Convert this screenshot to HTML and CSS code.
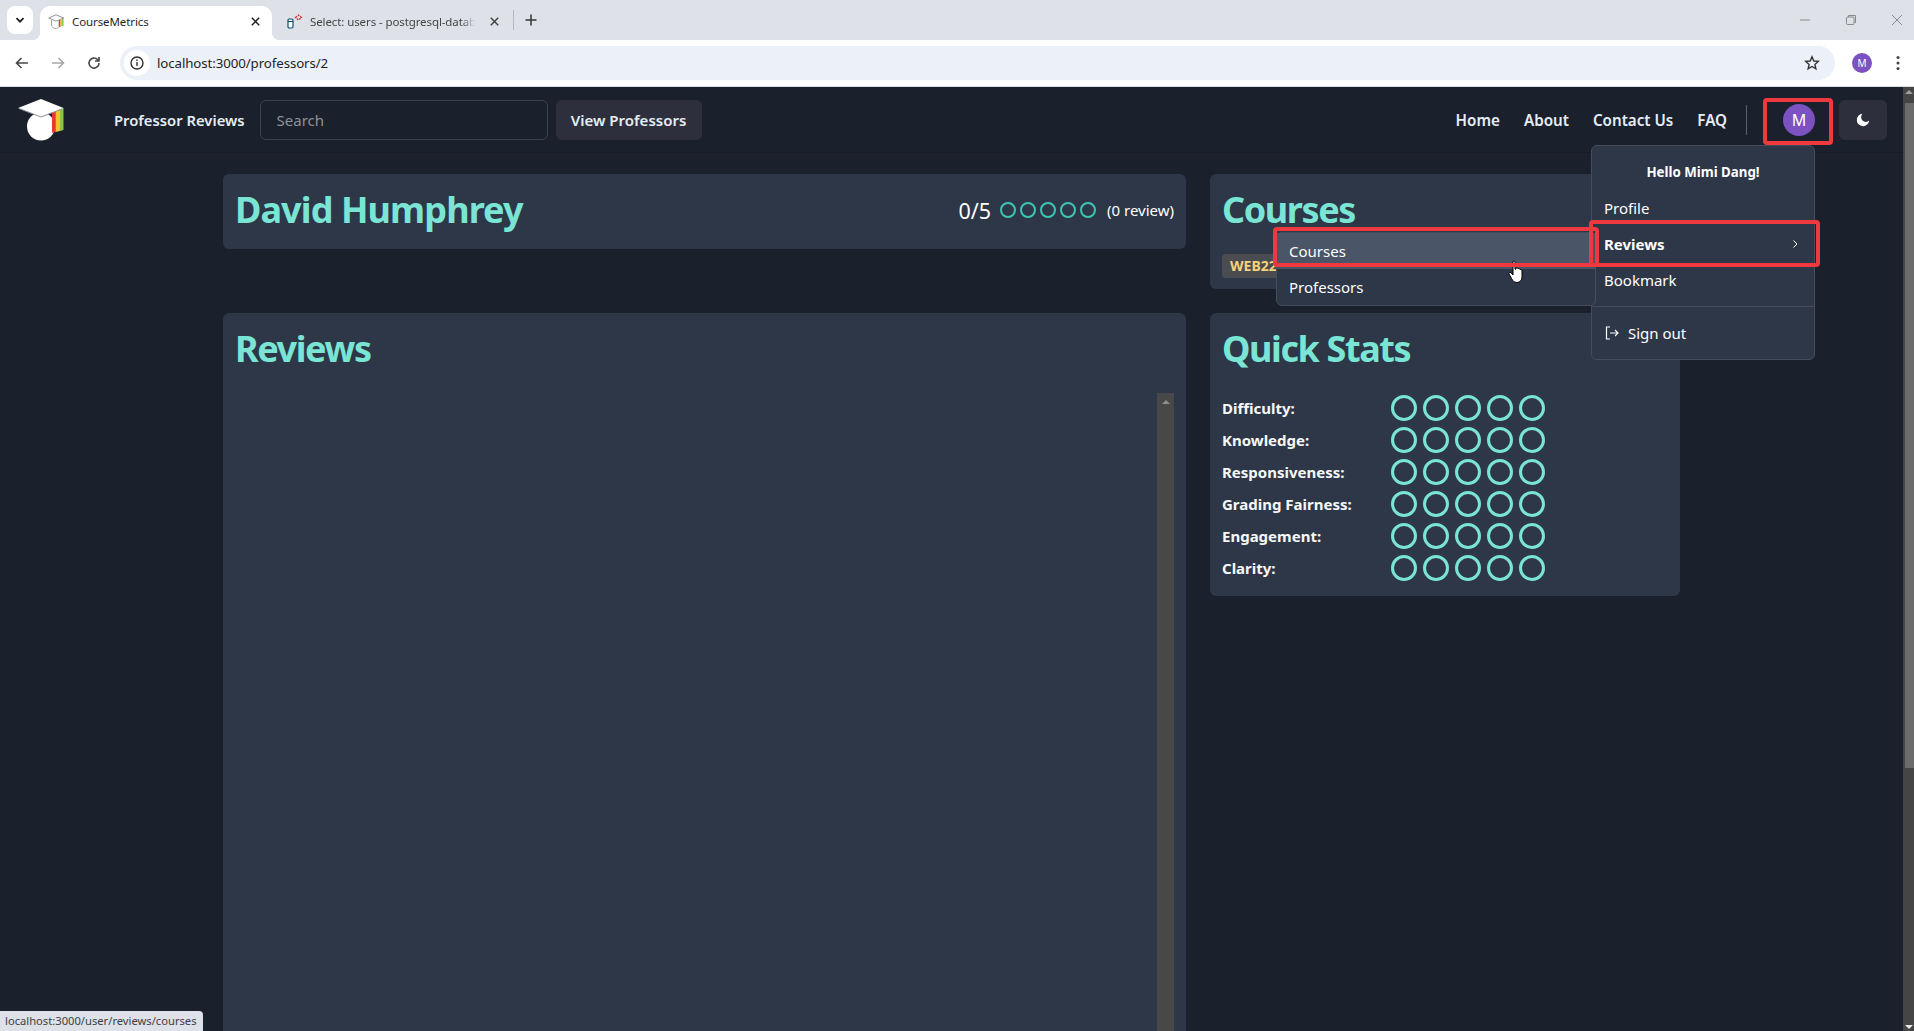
FILE: index.html
```html
<!DOCTYPE html>
<html lang="en">
<head>
<meta charset="utf-8">
<title>CourseMetrics</title>
<link rel="stylesheet" href="styles.css">
</head>
<body>
<div class="browser">
  <div class="tabstrip">
    <button class="tabsearch"><svg width="12" height="12" viewBox="0 0 12 12"><path d="M2.500 4.200 6 7.700l3.500-3.500" fill="none" stroke="#1f1f1f" stroke-width="1.800"/></svg></button>
    <div class="tab active">
      <svg class="favicon" width="17" height="15" viewBox="0 0 17 15"><path d="M3.500 6v5c.8 2.500 2.500 3.500 4 3.500s2.700-.6 3.500-1.800V6" fill="#fff" stroke="#9a9a9a" stroke-width=".9"/><path d="M11 6h1.500v7H11z" fill="#e8392f"/><path d="M12.500 5.500H14v6.500h-1.500z" fill="#f4c430"/><path d="M14 4.500h1.500V12H14z" fill="#8bc34a"/><path d="M.8 4 8 .8 15.800 4 8 7.200z" fill="#fff" stroke="#8a8a8a" stroke-width=".9"/></svg>
      <span class="tabtitle">CourseMetrics</span>
      <svg class="tabclose" width="9" height="9" viewBox="0 0 9 9"><path d="M.8.800l7.400 7.400M8.200.800.800 8.200" stroke="#1f1f1f" stroke-width="1.500"/></svg>
    </div>
    <div class="tab inactive">
      <svg class="favicon" width="16" height="15" viewBox="0 0 16 15"><rect x="1" y="5" width="5" height="9" rx="1.200" fill="#fff" stroke="#0b4f6c" stroke-width="1.200"/><path d="M1 7.500h5" stroke="#0b4f6c"/><path d="M8.500 3.500 11.500 1l3 2.500-3 2.500z" fill="none" stroke="#d32f2f" stroke-width="1.300" stroke-dasharray="2 1"/></svg>
      <span class="tabtitle fade">Select: users - postgresql-datab</span>
      <svg class="tabclose" width="9" height="9" viewBox="0 0 9 9"><path d="M.8.800l7.400 7.400M8.200.800.800 8.200" stroke="#444" stroke-width="1.500"/></svg>
    </div>
    <span class="tabsep"></span>
    <svg class="newtab" width="12" height="12" viewBox="0 0 12 12"><path d="M6 .5v11M.5 6h11" stroke="#333" stroke-width="1.500"/></svg>
    <div class="winctl">
      <svg width="12" height="12" viewBox="0 0 12 12"><path d="M1 6h10" stroke="#8a8a8a"/></svg>
      <svg width="12" height="12" viewBox="0 0 12 12"><path d="M3.500 3V1.500h7v7H9" fill="none" stroke="#8a8a8a"/><rect x="1.500" y="3" width="7.500" height="7.500" rx="1" fill="none" stroke="#8a8a8a"/></svg>
      <svg width="12" height="12" viewBox="0 0 12 12"><path d="M1 1l10 10M11 1 1 11" stroke="#8a8a8a"/></svg>
    </div>
  </div>
  <div class="toolbar">
    <svg class="tool" width="16" height="16" viewBox="0 0 16 16"><path d="M14 8H3M7.500 3 2.500 8l5 5" fill="none" stroke="#474747" stroke-width="1.600"/></svg>
    <svg class="tool" width="16" height="16" viewBox="0 0 16 16"><path d="M2 8h11M8.500 3l5 5-5 5" fill="none" stroke="#a8a8a8" stroke-width="1.600"/></svg>
    <svg class="tool" width="16" height="16" viewBox="0 0 16 16"><path d="M13 8a5 5 0 1 1-1.500-3.500L13 6M13 2v4H9" fill="none" stroke="#474747" stroke-width="1.600"/></svg>
    <div class="omnibox">
      <span class="siteinfo"><svg width="16" height="16" viewBox="0 0 16 16"><circle cx="8" cy="8" r="6" fill="none" stroke="#333" stroke-width="1.400"/><path d="M8 7v4M8 4.600v1.300" stroke="#333" stroke-width="1.400"/></svg></span>
      <span class="url">localhost:3000/professors/2</span>
      <svg class="star" width="16" height="16" viewBox="0 0 16 16"><path d="M8 1.800 9.800 6l4.500.4-3.400 3 1 4.400L8 11.500l-3.900 2.300 1-4.400-3.400-3L6.200 6z" fill="none" stroke="#333" stroke-width="1.400"/></svg>
    </div>
    <span class="profile">M</span>
    <svg class="kebab" width="4" height="16" viewBox="0 0 4 16"><circle cx="2" cy="2.500" r="1.500" fill="#444"/><circle cx="2" cy="8" r="1.500" fill="#444"/><circle cx="2" cy="13.500" r="1.500" fill="#444"/></svg>
  </div>
</div>

<div class="viewport">
  <div class="page">
    <header class="navbar">
      <svg class="logo" width="46" height="42" viewBox="0 0 46 42"><circle cx="23" cy="27.500" r="14" fill="#fff"/><path d="M34 12h3.500v21L34 34z" fill="#e8392f"/><path d="M37.500 11H42v21l-4.500 1z" fill="#f4c430"/><path d="M42 9h3.500v22L42 32z" fill="#8bc34a"/><path d="M0 9 23 0l22.500 9L23 18z" fill="#fff"/><path d="M1 9.500 23 18l21-8" fill="none" stroke="#8d9299" stroke-width="1"/></svg>
      <a class="brand">Professor Reviews</a>
      <input class="search" placeholder="Search">
      <button class="ghost-btn">View Professors</button>
      <nav class="navlinks">
        <a>Home</a><a>About</a><a>Contact Us</a><a>FAQ</a>
      </nav>
      <span class="navsep"></span>
      <div class="avatarwrap"><span class="avatar">M</span></div>
      <button class="themebtn"><svg width="14" height="14" viewBox="0 0 14 14"><path d="M6.500.8A6.200 6.200 0 1 0 13.200 7.500 4 4 0 0 1 6.500.8z" fill="#fff"/></svg></button>
    </header>
    <main class="content">
      <section class="card headcard">
        <h1 class="prof">David Humphrey</h1>
        <div class="rating">
          <span class="score">0/5</span>
          <span class="minis"><i></i><i></i><i></i><i></i><i></i></span>
          <span class="count">(0 review)</span>
        </div>
      </section>
      <section class="card coursecard">
        <h2>Courses</h2>
        <span class="badge">WEB222</span>
      </section>
      <section class="card reviews">
        <h2>Reviews</h2>
        <div class="reviewlist">
          <div class="innerbar"><b></b></div>
        </div>
      </section>
      <section class="card stats">
        <h2>Quick Stats</h2>
        <div class="statgrid">
          <span>Difficulty:</span><div class="dots"><i></i><i></i><i></i><i></i><i></i></div>
          <span>Knowledge:</span><div class="dots"><i></i><i></i><i></i><i></i><i></i></div>
          <span>Responsiveness:</span><div class="dots"><i></i><i></i><i></i><i></i><i></i></div>
          <span>Grading Fairness:</span><div class="dots"><i></i><i></i><i></i><i></i><i></i></div>
          <span>Engagement:</span><div class="dots"><i></i><i></i><i></i><i></i><i></i></div>
          <span>Clarity:</span><div class="dots"><i></i><i></i><i></i><i></i><i></i></div>
        </div>
      </section>
    </main>
  </div>
  <div class="pagebar"><b class="up"></b><span class="thumb"></span><b class="down"></b></div>

  <div class="menu mainmenu">
    <p class="hello">Hello Mimi Dang!</p>
    <a class="item">Profile</a>
    <a class="item strong">Reviews<svg width="8" height="10" viewBox="0 0 8 10"><path d="M2.500 1.500 6 5 2.500 8.500" fill="none" stroke="#fff" stroke-width="1"/></svg></a>
    <a class="item">Bookmark</a>
    <hr class="divider">
    <a class="item signout"><svg width="16" height="16" viewBox="0 0 16 16"><path d="M6 2H2.500v12H6M6 8h8M11 5l3 3-3 3" fill="none" stroke="#fff" stroke-width="1.200"/></svg>Sign out</a>
  </div>
  <div class="menu submenu">
    <a class="item hover">Courses</a>
    <a class="item">Professors</a>
  </div>
  <svg class="cursor" width="16" height="24" viewBox="0 0 16 24"><path d="M5 1.500c1-.8 2-.2 2 1V9l1 .2V8c1-.8 2-.3 2 .8.800-.8 2-.3 2 .8.800-.4 2 0 2 1.200V17c0 3-2 5.500-5 5.500S5 21 3.500 18.500L1 14c-.5-1 .8-2.200 2-1.200L5 15z" fill="#fff" stroke="#000"/></svg>
  <span class="mark mark-avatar"></span>
  <span class="mark mark-courses"></span>
  <span class="mark mark-reviews"></span>
  <div class="statusbar">localhost:3000/user/reviews/courses</div>
</div>
</body>
</html>
```
FILE: styles.css
```css
* { box-sizing: border-box; }
html, body { margin: 0; height: 100%; overflow: hidden; }
body { display: flex; flex-direction: column; font-family: "Noto Sans", "Open Sans", sans-serif; background: #1a202c; color: #fff; }

.browser { flex: none; background: #fff; font-family: "Noto Sans", sans-serif; }
.tabstrip { height: 40px; background: #dee1e7; display: flex; align-items: flex-end; padding-left: 7px; }
.tabsearch { flex: none; width: 26px; height: 28px; margin: 0 7px 6px 0; border: 0; border-radius: 8px; background: #fff; padding: 0; display: flex; align-items: center; justify-content: center; }
.tab { flex: none; height: 34px; display: flex; align-items: center; font-size: 11.500px; padding-bottom: 4px; position: relative; }
.tab.active { width: 232px; padding-left: 8px; padding-right: 12px; background: #fff; border-radius: 10px 10px 0 0; color: #1f1f1f; }
.tab.active::before, .tab.active::after { content: ""; position: absolute; bottom: 0; width: 8px; height: 8px; }
.tab.active::before { left: -8px; background: radial-gradient(circle at 0 0, transparent 8px, #fff 8.500px); }
.tab.active::after { right: -8px; background: radial-gradient(circle at 100% 0, transparent 8px, #fff 8.500px); }
.tab.inactive { width: 241px; padding-left: 15px; color: #444; }
.favicon { flex: none; margin-right: 7px; }
.tabtitle { flex: 1; white-space: nowrap; min-width: 0; letter-spacing: -.1px; }
.fade { flex: none; width: 165px; -webkit-mask-image: linear-gradient(90deg, #000 92%, transparent); mask-image: linear-gradient(90deg, #000 92%, transparent); }
.inactive .tabclose { margin-left: 15px; }
.tabclose { flex: none; }
.tabsep { flex: none; width: 1px; height: 20px; background: #b6b8bd; margin: 0 0 10px 0; }
.newtab { flex: none; margin: 0 0 14px 11px; }
.winctl { margin-left: auto; display: flex; gap: 34px; padding-right: 11px; align-self: center; }

.toolbar { height: 47px; display: flex; align-items: center; padding: 0 0 1px 14px; border-bottom: 1px solid #dadce0; }
.tool { flex: none; margin-right: 20px; }
.omnibox { flex: 1; height: 34px; margin: 0 17px 0 -2px; background: #ebf0f9; border-radius: 17px; display: flex; align-items: center; padding: 0 15px 0 4px; }
.siteinfo { width: 26px; height: 26px; background: #fff; border-radius: 50%; display: flex; align-items: center; justify-content: center; margin-right: 7px; }
.url { flex: 1; font-size: 13.300px; color: #1f1f1f; letter-spacing: -.1px; }
.profile { width: 20px; height: 20px; border-radius: 50%; background: #7c51c0; color: #fff; font-size: 10px; display: flex; align-items: center; justify-content: center; margin-right: 24px; }
.kebab { margin-right: 14px; flex: none; }

.viewport { flex: 1; min-height: 0; display: flex; position: relative; overflow: hidden; }
.page { flex: 1; min-width: 0; overflow: hidden; }
.pagebar { flex: none; width: 11px; background: #454545; display: flex; flex-direction: column; position: relative; }
.thumb { display: block; width: 9px; height: 665px; margin: 16px 0 0 2px; background: #6b6b6b; }
.up, .down { position: absolute; left: 2px; width: 0; height: 0; border: 4px solid transparent; }
.up { top: 3px; border-top: 0; border-bottom: 4px solid #a0a0a0; }
.down { bottom: 2px; border-bottom: 0; border-top: 4px solid #e8e8e8; }

.navbar { height: 66px; display: flex; align-items: center; padding: 0 16px 0 18px; background: #1a202c; border-bottom: 1px solid #161b25; }
.logo { flex: none; margin-right: 50px; }
.brand { font-size: 14.800px; font-weight: 600; color: #e6edf5; white-space: nowrap; margin-right: 15px; }
.search { width: 288px; height: 40px; border: 1px solid #3a4150; border-radius: 6px; background: transparent; padding: 0 16px; font: 15px "Noto Sans", sans-serif; color: #fff; margin-right: 8px; }
.search::placeholder { color: #8d929b; opacity: 1; }
.ghost-btn { height: 40px; width: 146px; border: 0; border-radius: 6px; background: #2d303c; color: #e6edf5; font: 600 15px "Noto Sans", sans-serif; padding: 0; }
.navlinks { margin-left: auto; display: flex; gap: 24px; font-size: 15.200px; font-weight: 600; color: #e6edf5; }
.navsep { width: 1px; height: 30px; background: #59606c; margin: 0 22px 0 19px; }
.avatarwrap { width: 60px; display: flex; justify-content: center; margin-right: 10px; }
.avatar { width: 32px; height: 32px; border-radius: 50%; background: #7c51c0; color: #fff; font-size: 16px; display: flex; align-items: center; justify-content: center; }
.themebtn { width: 48px; height: 40px; border: 0; border-radius: 6px; background: #2d303c; padding: 0; display: flex; align-items: center; justify-content: center; }

.content { display: grid; grid-template-columns: 963px 470px; grid-template-rows: 115px auto; gap: 24px; justify-content: center; padding-top: 21px; }
.card { background: #2d3748; border-radius: 6px; padding: 12px; }
h1, h2 { margin: 0; font-size: 36px; line-height: 48px; font-weight: 700; color: #7be5d5; letter-spacing: -1.400px; }
h1 { letter-spacing: -.9px; }
.headcard { height: 75px; display: flex; justify-content: space-between; align-items: flex-start; }
.rating { display: flex; align-items: center; margin-top: 10px; height: 28px; }
.score { font-size: 21.500px; color: #fff; margin-right: 9px; }
.minis { display: flex; gap: 4px; margin-right: 11px; }
.minis i { width: 16px; height: 16px; border: 2px solid #3dc5b3; border-radius: 50%; }
.count { font-size: 15px; color: #fff; }

.reviews { height: 900px; }
.reviewlist { margin-top: 20px; height: 800px; position: relative; }
.innerbar { position: absolute; right: 0; top: 0; bottom: 0; width: 17px; background: #484848; }
.innerbar b { position: absolute; left: 5px; top: 7px; width: 0; height: 0; border: 4px solid transparent; border-top: 0; border-bottom: 4px solid #8e8e8e; }

.badge { display: inline-block; margin-top: 20px; padding: 0 8px; height: 24px; line-height: 24px; background: #4a4c50; border-radius: 4px; color: #f5d27c; font-size: 14px; font-weight: 700; }
.stats { height: 283px; }
.statgrid { display: grid; grid-template-columns: 169px 1fr; grid-auto-rows: 32px; align-items: center; margin-top: 19px; font-size: 15px; font-weight: 700; color: #f7f7f7; }
.dots { display: flex; gap: 6px; }
.dots i { width: 26px; height: 26px; border: 3px solid #7be5d5; border-radius: 50%; }

.menu { position: absolute; background: #2d3748; border: 1px solid #454d5c; color: #fff; font-size: 15px; }
.menu a { display: flex; align-items: center; }
.mainmenu { left: 1591px; top: 58px; width: 224px; border-radius: 6px; padding: 7px 0 8px; }
.hello { margin: 0; text-align: center; font-size: 13.300px; font-weight: 700; height: 37px; line-height: 38px; }
.item { height: 36px; padding: 0 12px; white-space: nowrap; }
.strong { font-weight: 700; justify-content: space-between; }
.strong svg { margin-right: 3px; }
.divider { border: 0; border-top: 1px solid #454d5c; margin: 8px 0; }
.signout svg { margin-right: 8px; }
.submenu { left: 1276px; top: 145px; width: 320px; border-radius: 6px; }
.hover { background: #4a5568; }

.mark { position: absolute; border: 4px solid #ee3a3f; border-radius: 4px; }
.mark-avatar { left: 1763px; top: 11px; width: 70px; height: 47px; }
.mark-courses { left: 1273px; top: 140px; width: 326px; height: 40px; }
.mark-reviews { left: 1589px; top: 133px; width: 231px; height: 47px; }
.cursor { position: absolute; left: 1508px; top: 173px; }
.statusbar { position: absolute; left: 0; bottom: 0; width: 203px; height: 20px; background: #dee1e7; border-top-right-radius: 4px; color: #3c4043; font-size: 11.200px; line-height: 20px; padding-left: 5px; white-space: nowrap; }
```
